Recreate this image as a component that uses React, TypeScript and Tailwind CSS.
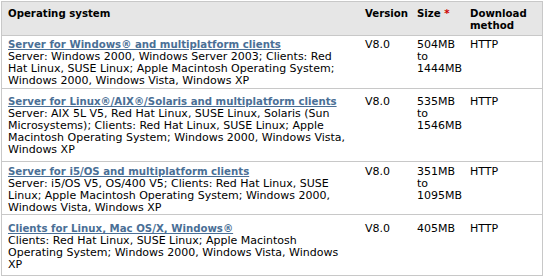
const rows = [
  {
    title: "Server for Windows® and multiplatform clients",
    lines: [
      "Server: Windows 2000, Windows Server 2003; Clients: Red",
      "Hat Linux, SUSE Linux; Apple Macintosh Operating System;",
      "Windows 2000, Windows Vista, Windows XP",
    ],
    size: ["504MB", "to", "1444MB"],
    row: "h-[53px] pt-[3px] border-b",
  },
  {
    title: "Server for Linux®/AIX®/Solaris and multiplatform clients",
    lines: [
      "Server: AIX 5L V5, Red Hat Linux, SUSE Linux, Solaris (Sun",
      "Microsystems); Clients: Red Hat Linux, SUSE Linux; Apple",
      "Macintosh Operating System; Windows 2000, Windows Vista,",
      "Windows XP",
    ],
    size: ["535MB", "to", "1546MB"],
    row: "h-[73px] pt-[7px] border-b",
  },
  {
    title: "Server for i5/OS and multiplatform clients",
    lines: [
      "Server: i5/OS V5, OS/400 V5; Clients: Red Hat Linux, SUSE",
      "Linux; Apple Macintosh Operating System; Windows 2000,",
      "Windows Vista, Windows XP",
    ],
    size: ["351MB", "to", "1095MB"],
    row: "h-[53px] pt-[4px] border-b",
  },
  {
    title: "Clients for Linux, Mac OS/X, Windows®",
    lines: [
      "Clients: Red Hat Linux, SUSE Linux; Apple Macintosh",
      "Operating System; Windows 2000, Windows Vista, Windows",
      "XP",
    ],
    size: ["405MB"],
    row: "h-[60px] pt-[8px]",
  },
]

const cols = "grid grid-cols-[357px_52px_53px_78px] border-[#c8c8c8]"

export default function App() {
  return (
    <div
      className="w-[545px] h-[278px] bg-white pl-px pt-px text-[11px] leading-[12px] text-black"
      style={{ fontFamily: "Verdana, 'DejaVu Sans', sans-serif" }}
    >
      <div className="w-[542px] border border-[#c8c8c8]">
        {/* header */}
        <div className={`${cols} h-[34px] border-b bg-[#e6e6e6] pt-[6px] font-bold text-[10.2px]`}>
          <div className="pl-[6px]">Operating system</div>
          <div className="pl-[6px]">Version</div>
          <div className="pl-[6px] whitespace-nowrap">
            Size <span className="text-[#cc0000]">*</span>
          </div>
          <div className="pl-[6px]">
            Download
            <br />
            method
          </div>
        </div>

        {rows.map((r) => (
          <div key={r.title} className={`${cols} ${r.row}`}>
            <div className="pl-[6px] whitespace-nowrap">
              <a href="#" className="block font-bold text-[10.2px] text-[#4a6f96] underline">
                {r.title}
              </a>
              {r.lines.map((l) => (
                <div key={l}>{l}</div>
              ))}
            </div>
            <div className="pl-[6px]">V8.0</div>
            <div className="pl-[6px]">
              {r.size.map((s) => (
                <div key={s}>{s}</div>
              ))}
            </div>
            <div className="pl-[6px]">HTTP</div>
          </div>
        ))}
      </div>
    </div>
  )
}
